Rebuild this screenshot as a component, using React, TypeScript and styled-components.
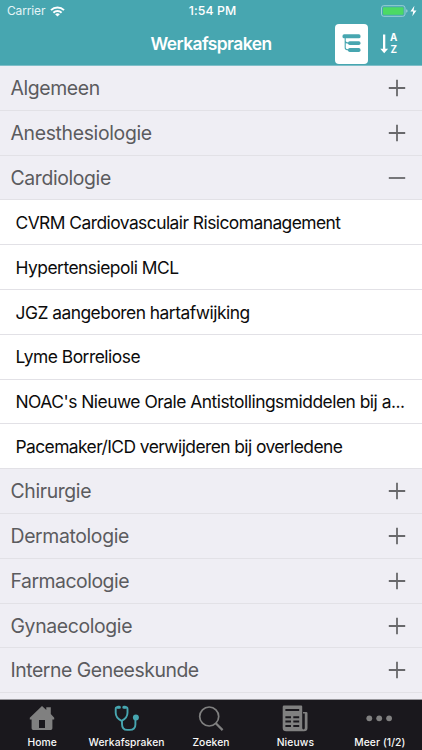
import React from "react";
import styled, { createGlobalStyle } from "styled-components";

const GlobalStyle = createGlobalStyle`
  * { box-sizing: border-box; }
  body { margin: 0; overflow: hidden; font-family: Inter, "Liberation Sans", sans-serif; }
`;

const Screen = styled.div`
  width: 422px;
  height: 750px;
  display: flex;
  flex-direction: column;
  overflow: hidden;
  background: #efeef4;
`;

const Header = styled.header`
  flex: none;
  height: 66px;
  background: #47a6b0;
  color: #fff;
  border-bottom: 1px solid #7fbec8;
`;

const StatusBar = styled.div`
  height: 22px;
  display: grid;
  grid-template-columns: 1fr auto 1fr;
  align-items: center;
  padding: 0 4px 0 7px;
  font-size: 12.3px;
  line-height: 22px;
`;

const Carrier = styled.div`
  display: flex;
  align-items: center;
  gap: 5px;
  font-size: 12px;
  letter-spacing: -0.15px;
  color: #e4f4f6;
`;

const Clock = styled.div`
  font-weight: 500;
  letter-spacing: 0.1px;
`;

const Power = styled.div`
  display: flex;
  justify-content: flex-end;
  align-items: center;
`;

const NavBar = styled.div`
  height: 43px;
  display: grid;
  grid-template-columns: 1fr auto 1fr;
  align-items: center;
`;

const Title = styled.h1`
  grid-column: 2;
  margin: 0;
  font-size: 17.4px;
  font-weight: 600;
  letter-spacing: -0.55px;
`;

const NavActions = styled.div`
  display: flex;
  align-items: center;
  justify-content: flex-end;
  gap: 12px;
  padding-right: 23px;
`;

const TreeButton = styled.button`
  width: 33px;
  height: 40px;
  padding: 0;
  border: 0;
  border-radius: 4px;
  background: #fff;
  display: grid;
  place-items: center;
`;

const SortButton = styled.button`
  width: 19px;
  height: 24px;
  padding: 0;
  border: 0;
  background: none;
  display: flex;
  align-items: center;
  gap: 1px;
  color: #fff;
`;

const SortLetters = styled.span`
  display: flex;
  flex-direction: column;
  font-family: Inter, "Liberation Sans", sans-serif;
  font-size: 9.8px;
  font-weight: 700;
  line-height: 12px;
`;

const List = styled.main`
  flex: 1;
  min-height: 0;
  overflow: hidden;
`;

const Row = styled.div`
  height: 44.8px;
  display: flex;
  align-items: center;
  padding-top: 0.3px;
  border-bottom: 1px solid #e2e1e6;
`;

const CategoryRow = styled(Row)`
  justify-content: space-between;
  padding-left: 10.5px;
  padding-right: 16px;
  color: #5b5b5e;
  background: #efeef4;
`;

const ItemRow = styled(Row)`
  padding-left: 15.5px;
  color: #0c0c0c;
  background: #fff;
`;

const Label = styled.span<{ $size: number; $tracking: number }>`
  font-size: ${(p) => p.$size}px;
  letter-spacing: ${(p) => p.$tracking}px;
  white-space: nowrap;
`;

const TabBar = styled.nav`
  flex: none;
  height: 51px;
  display: grid;
  grid-template-columns: repeat(5, 1fr);
  background: #1a181d;
  border-top: 1px solid #98979c;
`;

const Tab = styled.div`
  display: flex;
  flex-direction: column;
  align-items: center;
  padding-top: 5px;
  color: #808080;
`;

const TabLabel = styled.span`
  margin-top: 3px;
  font-size: 10.3px;
  line-height: 13px;
  font-weight: 500;
  letter-spacing: 0.1px;
  white-space: nowrap;
  color: #f8f8f8;
`;

const Wifi = () => (
  <svg width="15" height="11" viewBox="0 0 15 11" fill="none" stroke="#fff" strokeWidth="2">
    <path d="M1 4.1a9.3 9.3 0 0 1 13 0M3.4 6.7a5.9 5.9 0 0 1 8.2 0" />
    <path d="M7.5 10.6 5.1 8.3a3.5 3.5 0 0 1 4.8 0z" fill="#fff" stroke="none" />
  </svg>
);

const Battery = () => (
  <svg width="37" height="13" viewBox="0 0 37 13">
    <rect x="0.5" y="0.7" width="23.5" height="10.6" rx="2.2" fill="none" stroke="#9bd0d6" />
    <rect x="2" y="2.2" width="20.5" height="7.6" rx="1" fill="#4cd964" />
    <path d="M25.2 4.3q1.4.3 1.4 1.7t-1.4 1.7z" fill="#9bd0d6" />
    <path d="M33.4.8 29.4 6.5h2.8l-.9 4.8L35.5 5.5h-2.9z" fill="#fff" />
  </svg>
);

const TreeIcon = () => (
  <svg width="19" height="19" viewBox="0 0 19 19" fill="#47a6b0">
    <rect x="0.5" y="0.3" width="18" height="4" rx="1.6" />
    <rect x="6" y="7.3" width="12.5" height="3.7" rx="1.7" />
    <rect x="6" y="14.1" width="12.5" height="3.9" rx="1.7" />
    <path d="M3.2 3.5v10.2q0 2.2 3.4 2.2M3.2 7.1q0 2 3.4 2" fill="none" stroke="#47a6b0" strokeWidth="1.1" />
  </svg>
);

const ArrowDown = () => (
  <svg width="9" height="20" viewBox="0 0 9 20">
    <path d="M3 .5h2.3v14.3h2.8l-3.9 4.4L.3 14.8H3z" fill="#fff" />
  </svg>
);

const Toggle = ({ open }: { open?: boolean }) => (
  <svg width="18" height="18" viewBox="0 0 18 18" stroke="#68686b" strokeWidth="1.8">
    <path d={open ? "M.8 9h16.4" : "M.8 9h16.4M9 .8v16.4"} />
  </svg>
);

const HomeIcon = () => (
  <svg width="26" height="28" viewBox="0 0 26 28" fill="currentColor">
    <path fillRule="evenodd" d="M13 .9 17.3 5V2.2h4.5v6.9l3.4 3.7v1.6h-1.8v8.9q0 1.6-1.6 1.6H4.2q-1.6 0-1.6-1.6v-8.9H.8v-1.6zM10 14.9v8h6v-8z" />
  </svg>
);

const StethoscopeIcon = () => (
  <svg width="26" height="28" viewBox="0 0 26 28" fill="none" stroke="#47a6b0" strokeWidth="1.9" strokeLinecap="round">
    <path d="M5 2.2H3.2q-1.5 0-1.5 1.9v3.6c0 4 2.8 6.6 5.9 8.1 3.1-1.5 5.9-4.1 5.9-8.1V4.1q0-1.9-1.5-1.9h-1.6M8 15.8v3.2c0 3.9 1.7 5.9 5.3 5.9h2.3c3.7 0 5.8-2 5.8-5.4v-6" />
    <path d="M4 2.2h1.4M9.8 2.2h1.4" strokeWidth="3" />
    <circle cx="21.9" cy="12.4" r="3" fill="#47a6b0" stroke="none" />
  </svg>
);

const SearchIcon = () => (
  <svg width="26" height="28" viewBox="0 0 26 28" fill="none" stroke="currentColor" strokeWidth="1.7">
    <circle cx="11.2" cy="11.5" r="9.5" />
    <path d="m17.8 18.3 6.8 6.8" strokeWidth="2.2" />
  </svg>
);

const NewsIcon = () => (
  <svg width="26" height="28" viewBox="0 0 26 28">
    <path d="M2 .6h17.2q1 0 1 1v21.4q0 1.4 1.3 1.4t1.3-1.4V8.4H21V7h3.2q1.3 0 1.3 1.3V23q0 3.3-3.5 3.3H4.2Q.7 26.3.7 23V2q0-1.4 1.3-1.4z" fill="currentColor" />
    <path d="M3.4 5h13.8M3.4 12.2H9M11.3 12.2h5.9M3.4 16.6H9M11.3 16.6h5.9M3.4 21H9M11.3 21h5.9" stroke="#1a181d" strokeWidth="2" />
  </svg>
);

const MoreIcon = () => (
  <svg width="28" height="28" viewBox="0 0 28 28" fill="currentColor">
    <circle cx="3.3" cy="13.3" r="2.9" />
    <circle cx="13.2" cy="13.3" r="2.9" />
    <circle cx="23.1" cy="13.3" r="2.9" />
  </svg>
);

type Entry = { name: string; open?: boolean; item?: boolean; tracking: number };

const entries: Entry[] = [
  { name: "Algemeen", tracking: -0.38 },
  { name: "Anesthesiologie", tracking: -0.33 },
  { name: "Cardiologie", open: true, tracking: -0.37 },
  { name: "CVRM Cardiovasculair Risicomanagement", item: true, tracking: -0.54 },
  { name: "Hypertensiepoli MCL", item: true, tracking: -0.5 },
  { name: "JGZ aangeboren hartafwijking", item: true, tracking: -0.51 },
  { name: "Lyme Borreliose", item: true, tracking: -0.49 },
  { name: "NOAC's Nieuwe Orale Antistollingsmiddelen bij a...", item: true, tracking: -0.5 },
  { name: "Pacemaker/ICD verwijderen bij overledene", item: true, tracking: -0.57 },
  { name: "Chirurgie", tracking: -0.37 },
  { name: "Dermatologie", tracking: -0.36 },
  { name: "Farmacologie", tracking: -0.48 },
  { name: "Gynaecologie", tracking: -0.36 },
  { name: "Interne Geneeskunde", tracking: -0.45 },
];

const tabs = [
  { name: "Home", Icon: HomeIcon },
  { name: "Werkafspraken", Icon: StethoscopeIcon },
  { name: "Zoeken", Icon: SearchIcon },
  { name: "Nieuws", Icon: NewsIcon },
  { name: "Meer (1/2)", Icon: MoreIcon },
];

export default function App() {
  return (
    <>
      <GlobalStyle />
      <Screen>
        <Header>
          <StatusBar>
            <Carrier>Carrier <Wifi /></Carrier>
            <Clock>1:54 PM</Clock>
            <Power><Battery /></Power>
          </StatusBar>
          <NavBar>
            <Title>Werkafspraken</Title>
            <NavActions>
              <TreeButton aria-label="Boomstructuur"><TreeIcon /></TreeButton>
              <SortButton>
                <ArrowDown />
                <SortLetters><span>A</span><span>Z</span></SortLetters>
              </SortButton>
            </NavActions>
          </NavBar>
        </Header>
        <List>
          {entries.map((e) =>
            e.item ? (
              <ItemRow key={e.name}>
                <Label $size={17.4} $tracking={e.tracking}>{e.name}</Label>
              </ItemRow>
            ) : (
              <CategoryRow key={e.name}>
                <Label $size={19.4} $tracking={e.tracking}>{e.name}</Label>
                <Toggle open={e.open} />
              </CategoryRow>
            )
          )}
        </List>
        <TabBar>
          {tabs.map(({ name, Icon }) => (
            <Tab key={name}>
              <Icon />
              <TabLabel>{name}</TabLabel>
            </Tab>
          ))}
        </TabBar>
      </Screen>
    </>
  );
}
